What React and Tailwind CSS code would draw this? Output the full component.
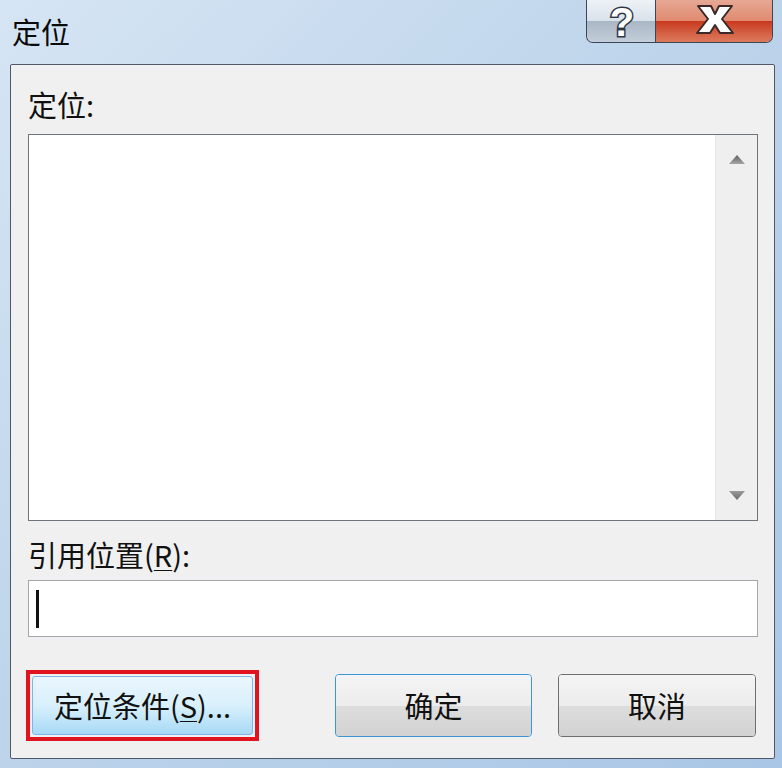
import React from 'react';

const cjk = "font-['Noto_Sans_CJK_SC','Noto_Sans',sans-serif]";

const CaptionButtons = () => (
  <div className="flex h-[43px] mt-0 mr-[9px]">
    <div className="w-[70px] h-full rounded-bl-[7px] border border-t-0 border-[#3a4556] overflow-hidden flex flex-col relative">
      <div className="h-1/2 bg-gradient-to-b from-[#eef2f6] to-[#d9e1ea]" />
      <div className="h-1/2 bg-gradient-to-b from-[#a9b6c4] to-[#c3ceda]" />
      <svg className="absolute inset-0" width="70" height="43" viewBox="0 0 70 43">
        <text x="35" y="36" textAnchor="middle" fontFamily="Liberation Sans, sans-serif" fontWeight="700" fontSize="40"
          fill="#ffffff" stroke="#2f3746" strokeWidth="3" paintOrder="stroke">?</text>
      </svg>
    </div>
    <div className="w-[117px] h-full rounded-br-[7px] border border-t-0 border-l-0 border-[#3a4556] overflow-hidden flex flex-col relative">
      <div className="h-1/2 bg-gradient-to-b from-[#e6a894] to-[#e08a70]" />
      <div className="h-1/2 bg-gradient-to-b from-[#c8371c] to-[#dc7a5c]" />
      <svg className="absolute inset-0" width="116" height="43" viewBox="0 0 116 43">
        <path d="M42 6 H55 L59 14 L63 6 H76 L66 19 L77 33 H64 L59 25 L54 33 H41 L52 19 Z"
          fill="#ffffff" stroke="#3a2a2a" strokeWidth="2" strokeLinejoin="round" />
      </svg>
    </div>
  </div>
);

const Arrow = ({ up }) => (
  <svg width="16" height="9" viewBox="0 0 16 9">
    <defs>
      <linearGradient id={up ? 'au' : 'ad'} x1="0" y1="0" x2="0" y2="1">
        <stop offset="0" stopColor={up ? '#5f5f5f' : '#9a9a9a'} />
        <stop offset="1" stopColor={up ? '#a5a5a5' : '#6a6a6a'} />
      </linearGradient>
    </defs>
    <path d={up ? 'M8 0 L16 9 H0 Z' : 'M0 0 H16 L8 9 Z'} fill={`url(#${up ? 'au' : 'ad'})`} />
  </svg>
);

const Btn = ({ children, className }) => (
  <div className={`h-[63px] rounded-[4px] border flex flex-col overflow-hidden relative ${className}`}>
    <div className="h-1/2 bg-gradient-to-b from-[#f4f4f4] to-[#ececec]" />
    <div className="h-1/2 bg-gradient-to-b from-[#dddddd] to-[#d2d2d2]" />
    <span className={`absolute inset-0 flex items-center justify-center text-[29px] leading-none text-[#111] ${cjk}`}>{children}</span>
  </div>
);

export default function App() {
  return (
    <div className="w-[782px] h-[768px] bg-gradient-to-br from-[#d6e5f4] via-[#bcd3ea] to-[#a9c6e6] flex flex-col overflow-hidden">
      <div className="h-[64px] flex justify-between items-start">
        <div className={`pl-[12px] pt-[15px] text-[29px] leading-[32px] text-[#0b0b0b] ${cjk}`}>定位</div>
        <CaptionButtons />
      </div>
      <div className="ml-[10px] mr-[7px] h-[695px] border border-[#4f5868] rounded-[2px] bg-[#f0f0f0] pl-[17px] pr-[16px] pt-[25px] flex flex-col">
        <div className={`h-[28px] text-[29px] leading-[28px] text-[#111] ${cjk}`}>定位:</div>
        <div className="mt-[16px] h-[387px] border border-[#6e737c] bg-white flex">
          <div className="flex-1" />
          <div className="w-[42px] bg-[#efefef] border-l border-[#e6e6e6] flex flex-col items-center justify-between pt-[20px] pb-[20px]">
            <Arrow up />
            <Arrow />
          </div>
        </div>
        <div className={`mt-[19px] h-[28px] text-[29px] leading-[28px] text-[#111] ${cjk}`}>
          引用位置(<span className="underline underline-offset-[3px] decoration-1">R</span>):
        </div>
        <div className="mt-[12px] h-[57px] border border-[#a3a6ab] bg-white flex items-center pl-[7px]">
          <div className="w-[3px] h-[38px] bg-[#111]" />
        </div>
        <div className="mt-[33px] flex items-center">
          <div className="-ml-[2px] border-[4px] border-[#e0141e] p-[2px]">
            <div className="w-[221px] h-[59px] rounded-[3px] border border-[#7eb4ea] bg-gradient-to-b from-[#eaf6fd] via-[#d9f0fc] to-[#a7d9f5] flex items-center justify-center">
              <span className={`text-[29px] leading-none text-[#111] ${cjk}`}>
                定位条件(<span className="underline underline-offset-[3px] decoration-1">S</span>)...
              </span>
            </div>
          </div>
          <Btn className="ml-[76px] w-[197px] border-[#3c95d4] shadow-[inset_0_0_0_1px_#9fd3f5]">确定</Btn>
          <Btn className="ml-[26px] w-[198px] border-[#6f6f6f]">取消</Btn>
        </div>
      </div>
    </div>
  );
}
